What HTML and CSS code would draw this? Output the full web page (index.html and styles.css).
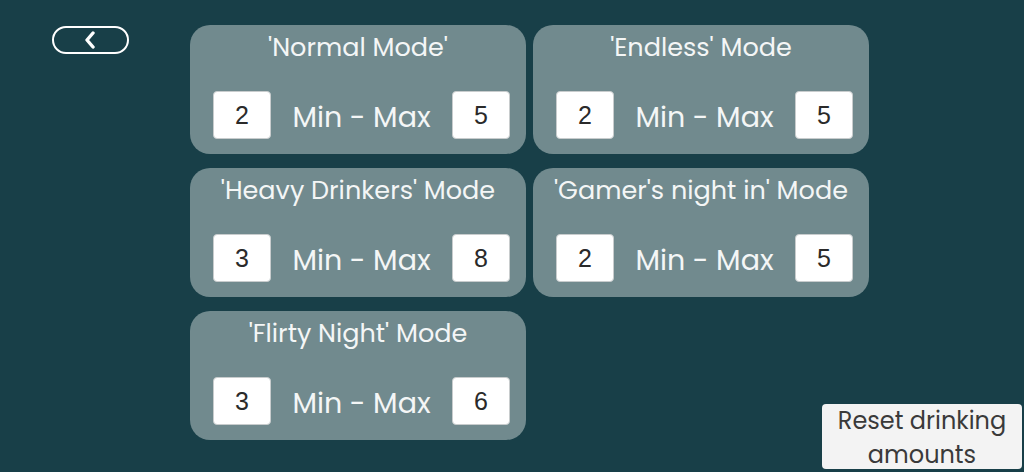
FILE: index.html
```html
<!DOCTYPE html>
<html>
<head>
<meta charset="utf-8">
<link rel="stylesheet" href="styles.css">
</head>
<body>
<div class="page">
  <div class="left">
    <button class="back" aria-label="Back">
      <svg width="14" height="18" viewBox="0 0 14 18"><path d="M10 2 L4 9 L10 16" fill="none" stroke="#ffffff" stroke-width="3.4" stroke-linecap="round" stroke-linejoin="round"/></svg>
    </button>
  </div>
  <div class="grid">
    <div class="card">
      <div class="title">'Normal Mode'</div>
      <div class="row"><div class="num">2</div><div class="label">Min - Max</div><div class="num">5</div></div>
    </div>
    <div class="card">
      <div class="title">'Endless' Mode</div>
      <div class="row"><div class="num">2</div><div class="label">Min - Max</div><div class="num">5</div></div>
    </div>
    <div class="card">
      <div class="title">'Heavy Drinkers' Mode</div>
      <div class="row"><div class="num">3</div><div class="label">Min - Max</div><div class="num">8</div></div>
    </div>
    <div class="card">
      <div class="title">'Gamer's night in' Mode</div>
      <div class="row"><div class="num">2</div><div class="label">Min - Max</div><div class="num">5</div></div>
    </div>
    <div class="card">
      <div class="title">'Flirty Night' Mode</div>
      <div class="row"><div class="num">3</div><div class="label">Min - Max</div><div class="num">6</div></div>
    </div>
  </div>
  <div class="right">
    <button class="reset">Reset drinking<br>amounts</button>
  </div>
</div>
</body>
</html>
```
FILE: styles.css
```css
html, body {
  margin: 0;
  padding: 0;
  background: #183f48;
}
.page {
  display: flex;
  width: 1024px;
  height: 472px;
  box-sizing: border-box;
  font-family: "Poppins", "Open Sans", sans-serif;
}
.left {
  flex: 0 0 190px;
  padding: 26px 0 0 52px;
  box-sizing: border-box;
}
.back {
  width: 77px;
  height: 28px;
  border: 2px solid #ffffff;
  border-radius: 14px;
  background: transparent;
  padding: 0;
  display: flex;
  align-items: center;
  justify-content: center;
  box-sizing: border-box;
}
.back svg {
  display: block;
  margin-left: -2px;
}
.grid {
  flex: 0 0 auto;
  display: grid;
  grid-template-columns: 336px 336px;
  grid-auto-rows: 129px;
  column-gap: 7px;
  row-gap: 14px;
  padding-top: 25px;
  align-content: start;
}
.card {
  background: #718a8e;
  border-radius: 20px;
  padding-top: 4px;
  box-sizing: border-box;
}
.title {
  text-align: center;
  color: #f4f6f6;
  font-size: 25.5px;
  line-height: 36px;
  height: 36px;
  white-space: nowrap;
}
.row {
  display: flex;
  align-items: center;
  justify-content: space-between;
  height: 48px;
  margin-top: 26px;
  padding: 0 16px 0 23px;
}
.num {
  width: 58px;
  height: 48px;
  box-sizing: border-box;
  background: #ffffff;
  border: 1px solid #c8cccd;
  border-radius: 4px;
  display: flex;
  align-items: center;
  justify-content: center;
  font-family: "Liberation Sans", Arial, sans-serif;
  font-size: 25px;
  color: #2a2a2a;
}
.label {
  color: #f4f6f6;
  font-size: 28.5px;
  line-height: 48px;
  padding-top: 4px;
}
.right {
  flex: 1 1 0;
  min-width: 0;
  display: flex;
  align-items: flex-end;
  justify-content: flex-end;
  padding: 0 2px 3px 0;
}
.reset {
  flex: 0 0 200px;
  width: 200px;
  height: 65px;
  background: #f3f3f3;
  border: none;
  border-radius: 4px;
  padding: 0;
  font-family: "Poppins", "Open Sans", sans-serif;
  font-size: 24px;
  line-height: 34px;
  color: #3a3a3a;
  text-align: center;
}
```
